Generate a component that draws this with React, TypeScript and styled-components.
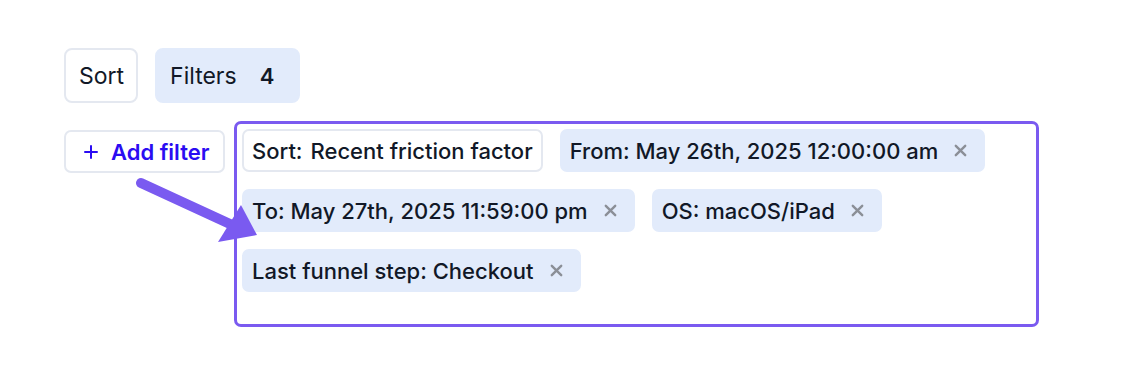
import React from "react";
import styled, {createGlobalStyle} from "styled-components";

const GlobalStyle = createGlobalStyle`
  body {
    margin: 0;
    background: #ffffff;
    font-family: Inter, "Noto Sans", sans-serif;
    color: #111827;
  }
`;

interface IChip {
    label: string;
    removable?: boolean;
}

const chips: IChip[] = [
    {label: "From: May 26th, 2025 12:00:00 am", removable: true},
    {label: "To: May 27th, 2025 11:59:00 pm", removable: true},
    {label: "OS: macOS/iPad", removable: true},
    {label: "Last funnel step: Checkout", removable: true},
];

const CloseIcon = () => (
    <svg width="13" height="13" viewBox="0 0 13 13">
        <path d="M1.8 1.8 L11.2 11.2 M11.2 1.8 L1.8 11.2" stroke="#8b8f97" strokeWidth="2.4" strokeLinecap="round"/>
    </svg>
);

const PlusIcon = () => (
    <svg width="14" height="14" viewBox="0 0 14 14">
        <path d="M7 1 V13 M1 7 H13" stroke="#2b0cf2" strokeWidth="2" strokeLinecap="round"/>
    </svg>
);

const App = () => {
    return (
        <Page>
            <GlobalStyle/>
            <TopRow>
                <ToolButton>Sort</ToolButton>
                <ToolButton $active>
                    Filters
                    <Count>4</Count>
                </ToolButton>
            </TopRow>
            <FilterRow>
                <AddButton>
                    <PlusIcon/>
                    Add filter
                </AddButton>
                <FilterBox>
                    <Chip $outlined>
                        <ChipKey>Sort:</ChipKey>
                        Recent friction factor
                    </Chip>
                    {chips.map((chip) => (
                        <Chip key={chip.label}>
                            {chip.label}
                            {chip.removable && (
                                <Remove>
                                    <CloseIcon/>
                                </Remove>
                            )}
                        </Chip>
                    ))}
                </FilterBox>
                <Arrow width="130" height="70" viewBox="0 0 130 70">
                    <line x1="6" y1="7" x2="95" y2="48" stroke="#7a5af0" strokeWidth="10" strokeLinecap="round"/>
                    <polygon points="106,29 122,59 83,66" fill="#7a5af0"/>
                </Arrow>
            </FilterRow>
        </Page>
    );
};

const Page = styled.div`
  padding: 48px 64px;
  display: flex;
  flex-direction: column;
  gap: 18px;
`;

const TopRow = styled.div`
  display: flex;
  gap: 17px;
`;

const ToolButton = styled.button<{ $active?: boolean }>`
  display: flex;
  align-items: center;
  height: 55px;
  padding: 0 12px 0 13px;
  border-radius: 8px;
  border: 2px solid ${(p) => (p.$active ? "#e2ebfb" : "#e4e8f0")};
  background: ${(p) => (p.$active ? "#e2ebfb" : "#ffffff")};
  font-family: Inter, sans-serif;
  font-size: 23px;
  font-weight: 400;
  color: #111827;
  cursor: pointer;
`;

const Count = styled.span`
  margin-left: 23px;
  margin-right: 12px;
  font-weight: 600;
  font-size: 22px;
`;

const FilterRow = styled.div`
  position: relative;
  display: flex;
  align-items: flex-start;
  gap: 9px;
`;

const AddButton = styled.button`
  box-sizing: border-box;
  display: flex;
  align-items: center;
  gap: 13px;
  margin-top: 9px;
  width: 161px;
  height: 43px;
  padding: 0 0 0 18px;
  border-radius: 7px;
  border: 2px solid #e4e8f0;
  background: #ffffff;
  font-family: Inter, sans-serif;
  font-size: 22px;
  font-weight: 600;
  color: #2b0cf2;
  white-space: nowrap;
  cursor: pointer;
`;

const FilterBox = styled.div`
  box-sizing: border-box;
  width: 805px;
  height: 206px;
  padding: 5px;
  border: 3px solid #7a5af0;
  border-radius: 7px;
  display: flex;
  flex-wrap: wrap;
  align-content: flex-start;
  gap: 17px 17px;
`;

const Chip = styled.div<{ $outlined?: boolean }>`
  box-sizing: border-box;
  display: flex;
  align-items: center;
  height: 43px;
  padding: 0 16px 0 8px;
  border-radius: 7px;
  border: 2px solid ${(p) => (p.$outlined ? "#e4e8f0" : "#e2ebfb")};
  background: ${(p) => (p.$outlined ? "#ffffff" : "#e2ebfb")};
  font-size: 22px;
  font-weight: 500;
  color: #111827;
  white-space: nowrap;
  ${(p) => p.$outlined && "padding-right: 8px;"}
`;

const ChipKey = styled.span`
  margin-right: 8px;
`;

const Remove = styled.span`
  display: flex;
  margin-left: 16px;
`;

const Arrow = styled.svg`
  position: absolute;
  left: 71px;
  top: 55px;
  pointer-events: none;
`;

export default App;
